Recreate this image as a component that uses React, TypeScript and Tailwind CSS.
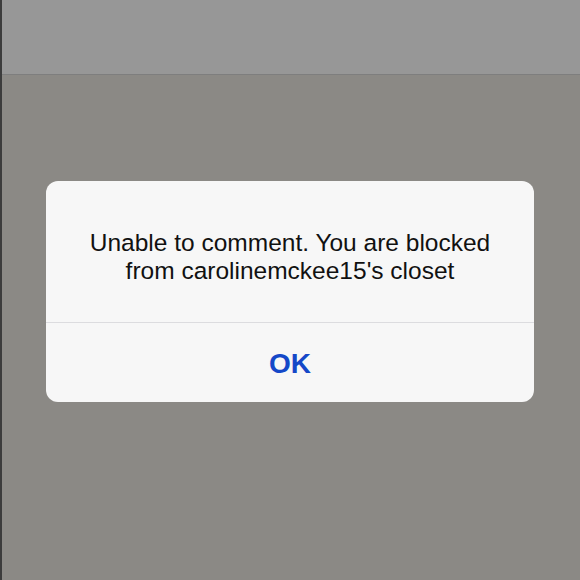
export default function App() {
  return (
    <div className="w-[580px] h-[580px] flex flex-col bg-[#8b8985] border-l-2 border-[#3c3c3c]" style={{ fontFamily: '"Liberation Sans", Arial, sans-serif' }}>
      <div className="h-[75px] bg-[#979797] border-b border-[#7e7e7e] shrink-0" />
      <div className="flex-1 flex justify-center pt-[106px] pr-[2px]">
        <div className="w-[488px] h-[221px] bg-[#f7f7f7] rounded-[12px] flex flex-col">
          <div className="h-[142px] flex flex-col items-center justify-center pt-[10px] border-b border-[#dcdcdf]">
            <p className="text-[24.5px] leading-[28px] text-[#111] text-center">Unable to comment. You are blocked</p>
            <p className="text-[24.5px] leading-[28px] text-[#111] text-center">from carolinemckee15's closet</p>
          </div>
          <div className="flex-1 flex items-center justify-center pt-[3px]">
            <span className="text-[28px] font-bold text-[#1448c8]">OK</span>
          </div>
        </div>
      </div>
    </div>
  );
}
